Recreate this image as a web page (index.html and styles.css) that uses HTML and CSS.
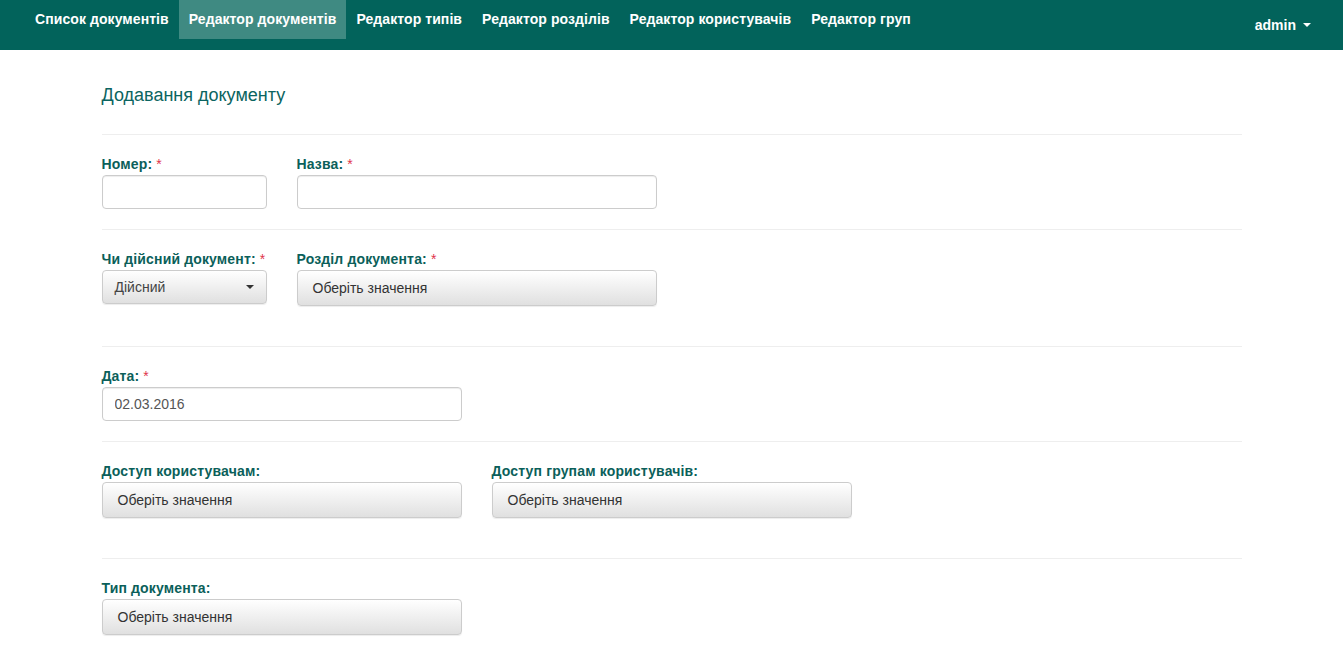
FILE: index.html
```html
<!DOCTYPE html>
<html lang="uk">
<head>
<meta charset="utf-8">
<title>Додавання документу</title>
<link rel="stylesheet" href="styles.css">
</head>
<body>
<nav class="navbar">
  <ul class="nav">
    <li><a href="#">Список документів</a></li>
    <li class="active"><a href="#">Редактор документів</a></li>
    <li><a href="#">Редактор типів</a></li>
    <li><a href="#">Редактор розділів</a></li>
    <li><a href="#">Редактор користувачів</a></li>
    <li><a href="#">Редактор груп</a></li>
  </ul>
  <div class="user">admin <span class="caret caret-white"></span></div>
</nav>

<main class="page">
  <h3 class="title">Додавання документу</h3>

  <section class="section">
    <div class="row">
      <div class="field w2">
        <label class="lbl">Номер: <span class="req">*</span></label>
        <input class="input" type="text">
      </div>
      <div class="field w4">
        <label class="lbl">Назва: <span class="req">*</span></label>
        <input class="input" type="text">
      </div>
    </div>
  </section>

  <section class="section tall">
    <div class="row">
      <div class="field w2">
        <label class="lbl">Чи дійсний документ: <span class="req">*</span></label>
        <div class="select">Дійсний <span class="caret"></span></div>
      </div>
      <div class="field w4">
        <label class="lbl">Розділ документа: <span class="req">*</span></label>
        <div class="btn">Оберіть значення</div>
      </div>
    </div>
  </section>

  <section class="section">
    <div class="row">
      <div class="field w4">
        <label class="lbl">Дата: <span class="req">*</span></label>
        <input class="input" type="text" value="02.03.2016">
      </div>
    </div>
  </section>

  <section class="section tall">
    <div class="row">
      <div class="field w4">
        <label class="lbl">Доступ користувачам:</label>
        <div class="btn">Оберіть значення</div>
      </div>
      <div class="field w4">
        <label class="lbl">Доступ групам користувачів:</label>
        <div class="btn">Оберіть значення</div>
      </div>
    </div>
  </section>

  <section class="section">
    <div class="row">
      <div class="field w4">
        <label class="lbl">Тип документа:</label>
        <div class="btn">Оберіть значення</div>
      </div>
    </div>
  </section>
</main>
</body>
</html>
```

FILE: styles.css
```css
* { box-sizing: border-box; }
html, body { margin: 0; padding: 0; }
body {
  font-family: "Liberation Sans", Arial, sans-serif;
  font-size: 14px;
  color: #333;
  background: #fff;
}

.navbar {
  height: 50px;
  background: #02635b;
  display: flex;
  justify-content: space-between;
  align-items: flex-start;
}
.nav {
  list-style: none;
  margin: 0;
  padding: 0 0 0 25px;
  display: flex;
}
.nav li a {
  display: block;
  padding: 10px;
  line-height: 19px;
  font-size: 14px;
  font-weight: bold;
  letter-spacing: 0.08px;
  color: #fff;
  text-decoration: none;
}
.nav li.active a { background: #3f8a82; }

.user {
  color: #fff;
  font-weight: bold;
  font-size: 14px;
  line-height: 20px;
  padding: 15px 32px 15px 0;
  display: flex;
  align-items: center;
  gap: 4px;
}
.caret {
  display: inline-block;
  width: 0;
  height: 0;
  border-top: 4px solid #333;
  border-left: 4px solid transparent;
  border-right: 4px solid transparent;
}
.caret-white { border-top-color: #fff; margin-left: 3px; }

.page {
  width: 1140px;
  margin: 0 auto;
}
.title {
  margin: 0;
  padding: 35px 0 29px;
  font-size: 18px;
  line-height: 20px;
  font-weight: normal;
  color: #0b6460;
}
.section {
  border-top: 1px solid #eee;
  padding: 20px 0 20px;
}
.section.tall { padding-bottom: 40px; }
.row { display: flex; gap: 30px; }
.field { display: flex; flex-direction: column; }
.w2 { width: 165px; }
.w4 { width: 360px; }
.lbl {
  font-size: 14px;
  font-weight: bold;
  letter-spacing: 0.15px;
  line-height: 19px;
  margin-bottom: 1px;
  color: #0b5f5a;
}
.req { color: #e0334c; font-weight: normal; }

.input {
  height: 34px;
  border: 1px solid #ccc;
  border-radius: 4px;
  padding: 6px 12px;
  font-family: inherit;
  font-size: 14px;
  color: #555;
  box-shadow: inset 0 1px 1px rgba(0,0,0,.075);
  outline: none;
}
.btn, .select {
  border: 1px solid #ccc;
  border-radius: 4px;
  background: linear-gradient(to bottom, #fff 0, #e0e0e0 100%);
  box-shadow: inset 0 1px 0 rgba(255,255,255,.15), 0 1px 1px rgba(0,0,0,.075);
  font-size: 14px;
  color: #333;
  display: flex;
  align-items: center;
}
.btn { height: 36px; padding: 0 15px; }
.select { height: 34px; padding: 0 12px; justify-content: space-between; color: #444; }
.select .caret { margin-right: 0; }
```
